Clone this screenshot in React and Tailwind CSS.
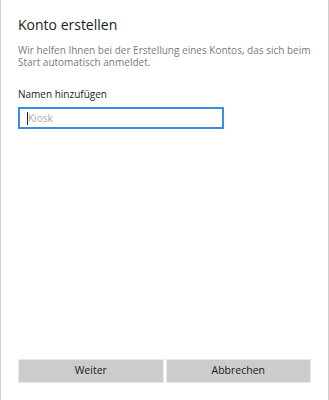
export default function App() {
  return (
    <div
      className="flex h-[400px] w-[329px] flex-col border-x border-[#cfcfcf] bg-white px-[17px]"
      style={{ fontFamily: '"Open Sans", "Noto Sans", sans-serif' }}
    >
      <h1 className="mt-[15px] text-[14px] leading-[20px] text-[#1a1a1a]">Konto erstellen</h1>
      <p className="mt-[9px] text-[10px] leading-[12px] text-[#7a7a7a]">
        Wir helfen Ihnen bei der Erstellung eines Kontos, das sich beim Start automatisch anmeldet.
      </p>
      <label className="mt-[19px] text-[10px] leading-[14px] text-[#1a1a1a]">Namen hinzufügen</label>
      <div className="mt-[6px] flex h-[22px] w-[206px] items-center border-2 border-[#3a8ee0] px-[7px]">
        <span className="h-[13px] w-px bg-[#222]" />
        <span className="text-[10px] text-[#a8a8a8]">Kiosk</span>
      </div>
      <div className="mt-auto mb-[17px] flex gap-[2px]">
        <button className="h-[24px] flex-1 border border-[#e8e8e8] bg-[#cccccc] text-[10.5px] text-[#1a1a1a]">
          Weiter
        </button>
        <button className="h-[24px] flex-1 border border-[#e8e8e8] bg-[#cccccc] text-[10.5px] text-[#1a1a1a]">
          Abbrechen
        </button>
      </div>
    </div>
  );
}
